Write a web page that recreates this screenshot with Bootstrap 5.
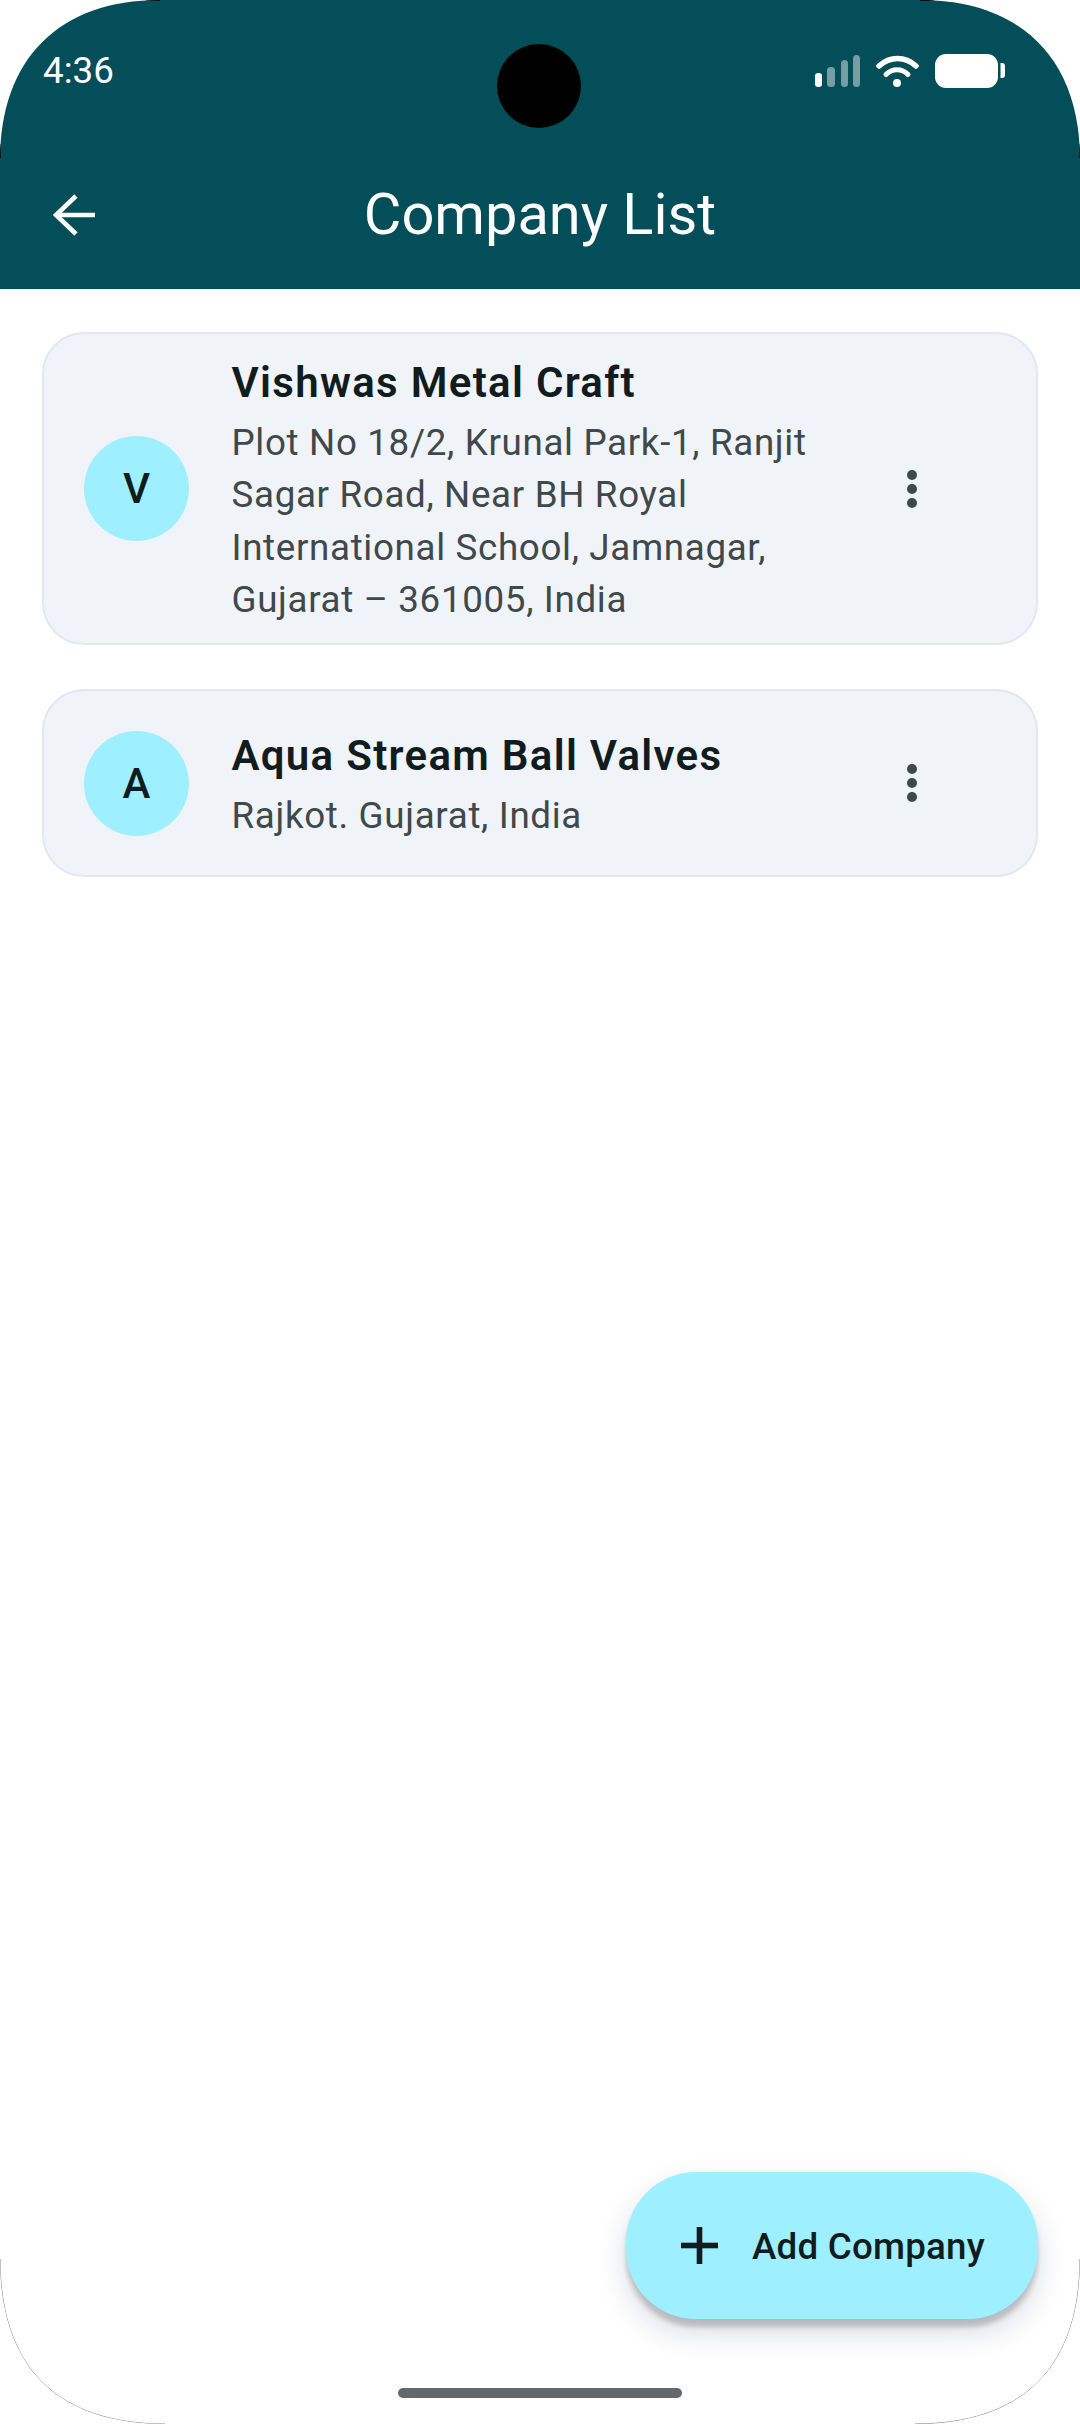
<!DOCTYPE html>
<html lang="en">
<head>
  <meta charset="UTF-8">
  <meta name="viewport" content="width=device-width, initial-scale=1.0">
  <title>Company List</title>
  <link href="https://cdn.jsdelivr.net/npm/bootstrap@5.3.3/dist/css/bootstrap.min.css" rel="stylesheet">
  <style>
    body { background: #fff; font-family: Roboto, sans-serif; color: #101c1e; }

    /* squircle outline of the device, same curve is used for the hairlines below */
    .phone { width: 1080px; height: 2424px; position: relative; background: #fff;
      clip-path: path("M0 160 C0 59 59 0 160 0 H920 C1021 0 1080 59 1080 160 V2259 C1080 2367 1023 2424 915 2424 H165 C57 2424 0 2367 0 2259 Z"); }

    .app-head { height: 289px; background: #034e58; color: #fff; }
    .status-row { height: 132px; padding: 47px 75px 0 43px; }
    .clock { font-size: 36.75px; line-height: 48px; }
    .status-icons { width: 190px; height: 36px; margin-top: 7px; }
    .camera { position: absolute; left: 497px; top: 44px; width: 84px; height: 84px; border-radius: 50%; background: #000; }

    .title-row { height: 157px; padding: 0 0 0 53px; position: relative; }
    .back-btn { width: 42px; height: 42px; margin-top: 9px; }
    .page-title { position: absolute; left: 0; right: 0; top: 49px; margin: 0; text-align: center; font-size: 57.75px; line-height: 66px; font-weight: 400; }

    .company-list { padding: 43px 42px 0; gap: 44px; }
    .company-card { background: #f0f3f8; border: 2.6px solid #e3e7ee; border-radius: 42px; min-height: 188px; padding: 16.5px 0 16.5px 40px; }
    .avatar { width: 105px; height: 105px; border-radius: 50%; background: #9eefff; font-size: 42px; font-weight: 500; flex-shrink: 0; }
    .company-text { width: 610px; margin-left: 42.5px; }
    .company-name { font-size: 42px; line-height: 63px; font-weight: 600; letter-spacing: 1.3px; margin: 0; }
    .company-addr { font-size: 36.75px; line-height: 52.5px; letter-spacing: .66px; color: #3f484a; margin: 3px 0 0; }
    .kebab { width: 10px; gap: 4px; margin-left: 65px; }
    .kebab span { width: 10px; height: 10px; border-radius: 50%; background: #3f484a; }

    .add-btn { position: absolute; left: 626px; top: 2172px; width: 412px; height: 147px; border-radius: 70px; background: #9eefff; color: #101c1e; border: 0; padding: 0 0 0 55px; font-size: 36.75px; font-weight: 500; letter-spacing: .2px; box-shadow: 0 8px 5px rgba(0,0,0,.18), 0 14px 30px rgba(20,40,80,.16); }
    .add-btn:hover { background: #9eefff; color: #101c1e; }
    .add-label { margin-left: 10px; padding-top: 2px; }
    .home-bar { position: absolute; left: 398px; top: 2388px; width: 284px; height: 10px; border-radius: 5px; background: #63696b; }
    .corner-lines { position: absolute; inset: 0; pointer-events: none; }
  </style>
</head>
<body class="m-0">
  <div class="phone">
    <header class="app-head">
      <div class="status-row d-flex justify-content-between align-items-start">
        <span class="clock">4:36</span>
        <svg class="status-icons" viewBox="0 0 190 36" fill="#fff">
          <rect x="0" y="19" width="7" height="14" rx="3"/>
          <g opacity=".45">
            <rect x="12" y="13" width="8" height="20" rx="3.5"/>
            <rect x="26" y="6" width="7" height="27" rx="3.5"/>
            <rect x="38" y="1" width="7" height="32" rx="3.5"/>
          </g>
          <path d="M64 12 C75 2 90 2 101 12" fill="none" stroke="#fff" stroke-width="5.5" stroke-linecap="round"/>
          <path d="M71 20.5 C77 14 87 14 93 20.5" fill="none" stroke="#fff" stroke-width="5" stroke-linecap="round"/>
          <circle cx="82" cy="29" r="4"/>
          <rect x="120" y="0" width="63" height="34" rx="11"/>
          <path d="M185.5 9 H187 Q190 9 190 12 V21 Q190 24 187 24 H185.5 Z"/>
        </svg>
      </div>
      <div class="title-row d-flex align-items-center">
        <svg class="back-btn" viewBox="0 0 42 42" fill="none" stroke="#fff" stroke-width="4.6">
          <path d="M42 21 H3"/>
          <path d="M23 2 L3 21 L23 40"/>
        </svg>
        <h1 class="page-title">Company List</h1>
      </div>
    </header>

    <div class="camera"></div>

    <main class="company-list d-flex flex-column">
      <div class="company-card d-flex align-items-center">
        <div class="avatar d-flex align-items-center justify-content-center">V</div>
        <div class="company-text">
          <p class="company-name">Vishwas Metal Craft</p>
          <p class="company-addr">Plot No 18/2, Krunal Park-1, Ranjit Sagar Road, Near BH Royal International School, Jamnagar, Gujarat – 361005, India</p>
        </div>
        <div class="kebab d-flex flex-column"><span></span><span></span><span></span></div>
      </div>
      <div class="company-card d-flex align-items-center">
        <div class="avatar d-flex align-items-center justify-content-center">A</div>
        <div class="company-text">
          <p class="company-name">Aqua Stream Ball Valves</p>
          <p class="company-addr">Rajkot. Gujarat, India</p>
        </div>
        <div class="kebab d-flex flex-column"><span></span><span></span><span></span></div>
      </div>
    </main>

    <button class="btn add-btn d-flex align-items-center" type="button">
      <svg width="37" height="37" viewBox="0 0 37 37" fill="#101c1e" class="me-4 flex-shrink-0">
        <rect x="15.7" y="0" width="5.6" height="37"/>
        <rect x="0" y="15.7" width="37" height="5.6"/>
      </svg>
      <span class="add-label">Add Company</span>
    </button>

    <div class="home-bar"></div>

    <svg class="corner-lines" viewBox="0 0 1080 2424" fill="none" stroke="#000" stroke-width="1">
      <path d="M0 2259 C0 2367 57 2424 165 2424" opacity=".45"/>
      <path d="M1080 2259 C1080 2367 1023 2424 915 2424" opacity=".45"/>
      <path d="M0.5 144 V158 M146 .5 H160 M1079.5 144 V158 M920 .5 H934" opacity=".8"/>
    </svg>
  </div>

  <script src="https://cdn.jsdelivr.net/npm/bootstrap@5.3.3/dist/js/bootstrap.bundle.min.js"></script>
</body>
</html>
